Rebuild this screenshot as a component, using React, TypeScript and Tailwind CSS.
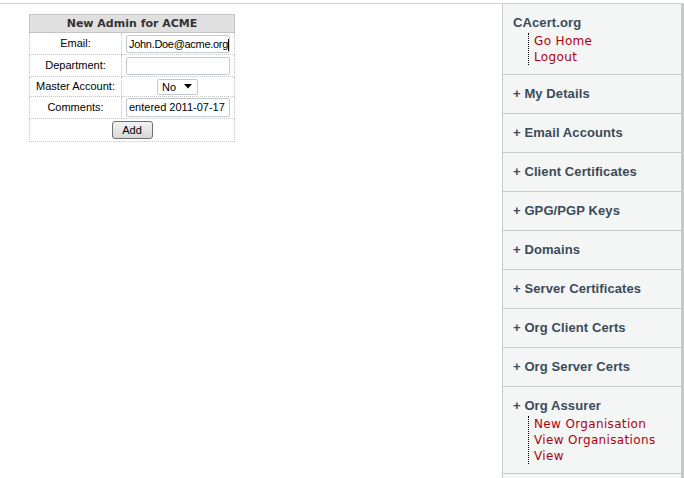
import React from "react";

const sections: { title: string; links: string[] }[] = [
  { title: "+ My Details", links: [] },
  { title: "+ Email Accounts", links: [] },
  { title: "+ Client Certificates", links: [] },
  { title: "+ GPG/PGP Keys", links: [] },
  { title: "+ Domains", links: [] },
  { title: "+ Server Certificates", links: [] },
  { title: "+ Org Client Certs", links: [] },
  { title: "+ Org Server Certs", links: [] },
  { title: "+ Org Assurer", links: ["New Organisation", "View Organisations", "View"] },
];

function Section({ title, links }: { title: string; links: string[] }) {
  return (
    <div className="border-b border-[#cccccc] pt-[11px] pb-[9px] pl-[10px]">
      <div
        className="h-[16px] leading-[16px] text-[13px] font-bold text-[#3b4b59] tracking-[0.1px]"
        style={{ fontFamily: '"Liberation Sans", Arial, sans-serif' }}
      >
        {title}
      </div>
      <div className="mt-[2px] ml-[15px]">
        {links.length > 0 && (
          <div className="border-l border-dotted border-black pl-[5px]">
            {links.map((l) => (
              <div
                key={l}
                className="h-[16px] leading-[16px] text-[12px] tracking-[0.35px] text-[#b0000b] whitespace-nowrap"
                style={{ fontFamily: '"DejaVu Sans", Verdana, sans-serif' }}
              >
                {l}
              </div>
            ))}
          </div>
        )}
      </div>
    </div>
  );
}

export default function App() {
  const labelCls =
    "border border-dotted border-[#c4c4c4] text-center text-[11px] text-black w-[92px] px-0";
  const valCls = "border border-dotted border-[#c4c4c4] text-center px-0";
  const inputCls =
    "block w-[104px] h-[18px] mx-auto border border-[#c2cad2] rounded-[2px] bg-white text-[11px] text-black px-[2px] leading-[16px] whitespace-nowrap overflow-hidden text-left";
  return (
    <div
      className="w-[684px] h-[478px] bg-white overflow-hidden"
      style={{ fontFamily: '"Liberation Sans", Arial, sans-serif' }}
    >
      <div className="mt-[3px] border-t border-[#d2d2d2] flex h-[475px]">
        <div className="flex-1">
          <table className="ml-[29px] mt-[10px] border-collapse w-[206px]">
            <tbody>
              <tr className="h-[18px]">
                <td
                  colSpan={2}
                  className="bg-[#e0e0e0] border border-[#c4c4c4] text-center text-[11px] font-bold text-[#333333] leading-[16px]"
                  style={{ fontFamily: '"DejaVu Sans", Verdana, sans-serif' }}
                >
                  New Admin for ACME
                </td>
              </tr>
              <tr className="h-[22px]">
                <td className={labelCls}>Email:</td>
                <td className={valCls}>
                  <div className={inputCls + " tracking-[-0.3px]"}>
                    John.Doe@acme.org
                    <span className="inline-block w-px h-[12px] bg-black align-middle"></span>
                  </div>
                </td>
              </tr>
              <tr className="h-[22px]">
                <td className={labelCls}>Department:</td>
                <td className={valCls}>
                  <div className={inputCls}></div>
                </td>
              </tr>
              <tr className="h-[20px]">
                <td className={labelCls}>Master Account:</td>
                <td className={valCls}>
                  <div className="ml-[35px] w-[41px] h-[16px] border border-[#c2cad2] rounded-[2px] bg-white flex items-center justify-between pl-[4px] pr-[5px] text-[11px] leading-[14px]">
                    <span>No</span>
                    <svg width="8" height="5" viewBox="0 0 8 5">
                      <path d="M0 0 L8 0 L4 4.5 Z" fill="#000" />
                    </svg>
                  </div>
                </td>
              </tr>
              <tr className="h-[22px]">
                <td className={labelCls}>Comments:</td>
                <td className={valCls}>
                  <div className={inputCls + " h-[19px]"}>entered 2011-07-17</div>
                </td>
              </tr>
              <tr className="h-[23px]">
                <td colSpan={2} className="border border-dotted border-[#c4c4c4] text-center">
                  <div className="mx-auto w-[41px] h-[18px] rounded-[3px] border border-[#707070] bg-gradient-to-b from-[#f2f2f2] to-[#d8d8d8] text-[11px] leading-[16px] text-black">
                    Add
                  </div>
                </td>
              </tr>
            </tbody>
          </table>
        </div>
        <div className="w-[182px] h-full bg-[#f4f5f5] border-l border-[#cccccc] border-r-[3px] border-r-[#c8c8c8]">
          <Section title="CAcert.org" links={["Go Home", "Logout"]} />
          {sections.map((s) => (
            <Section key={s.title} title={s.title} links={s.links} />
          ))}
        </div>
      </div>
    </div>
  );
}
